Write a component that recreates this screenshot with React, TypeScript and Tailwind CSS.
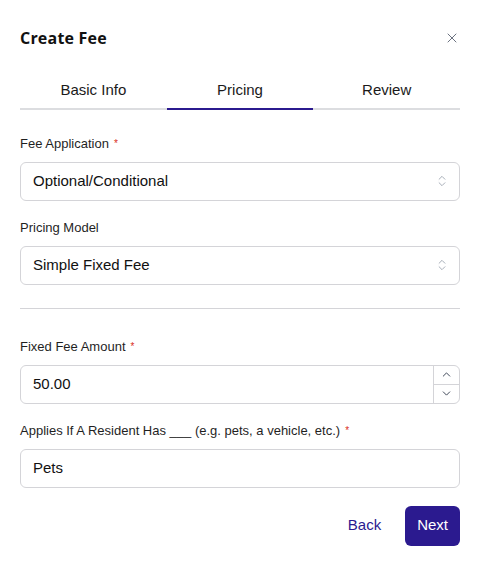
import { X, ChevronsUpDown, ChevronUp, ChevronDown } from "lucide-react";

const Req = () => <span className="ml-[5px] align-top text-[10px] text-[#d92d20]">*</span>;

function Label({ children, required }: { children: React.ReactNode; required?: boolean }) {
  return (
    <div className="text-[13px] leading-[18px] text-[#1f1f1f]">
      {children}
      {required && <Req />}
    </div>
  );
}

function SelectBox({ value }: { value: string }) {
  return (
    <div className="flex h-[39px] items-center justify-between rounded-md border border-[#d4d4d8] pl-3 pr-[10px] text-[15px] text-[#111]">
      <span>{value}</span>
      <ChevronsUpDown size={14} strokeWidth={1.5} className="text-[#9ca3af]" />
    </div>
  );
}

export default function App() {
  const tabs = ["Basic Info", "Pricing", "Review"];
  return (
    <div className="min-h-screen bg-white pl-5 pr-[19px] pt-[26px] pb-5" style={{ fontFamily: "'Liberation Sans', Arial, sans-serif" }}>
      <div className="flex items-center justify-between">
        <h2 className="text-[16px] font-bold tracking-[0.2px] text-[#111]" style={{ fontFamily: "'Open Sans', Inter, sans-serif" }}>
          Create Fee
        </h2>
        <X size={16} strokeWidth={1.5} className="text-[#6b7280]" />
      </div>

      <div className="mt-[29px] grid grid-cols-3">
        {tabs.map((t, i) => (
          <div
            key={t}
            className={`pb-[6px] text-center text-[15px] text-[#1a1a1a] border-b-2 ${
              i === 1 ? "border-[#2b1a8f]" : "border-[#dcdde0]"
            }`}
          >
            {t}
          </div>
        ))}
      </div>

      <div className="mt-[25px] flex flex-col gap-[9px]">
        <Label required>Fee Application</Label>
        <SelectBox value="Optional/Conditional" />
      </div>

      <div className="mt-[18px] flex flex-col gap-[9px]">
        <Label>Pricing Model</Label>
        <SelectBox value="Simple Fixed Fee" />
      </div>

      <div className="mt-[23px] border-t border-[#d4d4d8]" />

      <div className="mt-[29px] flex flex-col gap-[9px]">
        <Label required>Fixed Fee Amount</Label>
        <div className="flex h-[39px] items-stretch overflow-hidden rounded-md border border-[#d4d4d8] text-[15px] text-[#111]">
          <div className="flex flex-1 items-center px-3">50.00</div>
          <div className="flex w-[26px] flex-col border-l border-[#d4d4d8]">
            <div className="flex flex-1 items-center justify-center border-b border-[#d4d4d8]">
              <ChevronUp size={13} strokeWidth={1.75} className="text-[#374151]" />
            </div>
            <div className="flex flex-1 items-center justify-center">
              <ChevronDown size={13} strokeWidth={1.75} className="text-[#374151]" />
            </div>
          </div>
        </div>
      </div>

      <div className="mt-[18px] flex flex-col gap-[9px]">
        <Label required>Applies If A Resident Has ___ (e.g. pets, a vehicle, etc.)</Label>
        <div className="flex h-[39px] items-center rounded-md border border-[#d4d4d8] px-3 text-[15px] text-[#111]">
          Pets
        </div>
      </div>

      <div className="mt-[18px] flex items-center justify-end gap-[24px]">
        <button className="text-[15px] text-[#2b1a8f]">Back</button>
        <button className="h-10 rounded-md bg-[#2b1a8f] px-3 text-[15px] text-white">Next</button>
      </div>
    </div>
  );
}
